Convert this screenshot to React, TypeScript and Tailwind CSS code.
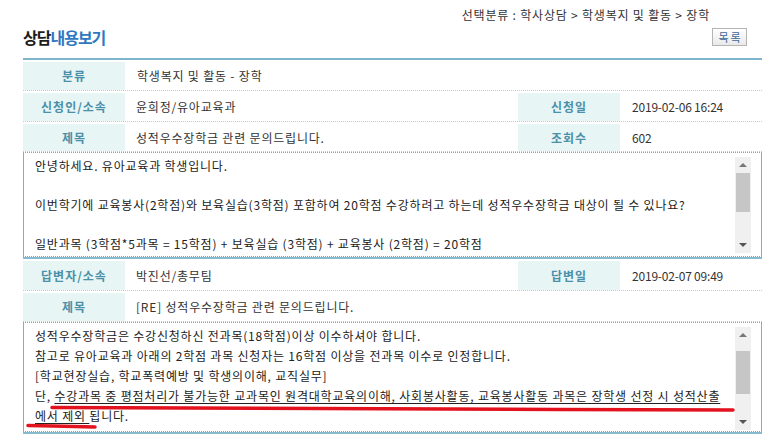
import React from 'react';

const FONT = "font-['Noto_Sans_CJK_KR','Noto_Sans',sans-serif]";

const Label = ({ children }: { children: React.ReactNode }) => (
  <div className="w-[102px] shrink-0 bg-[#e8f5f5] flex items-center justify-center text-[12px] font-bold tracking-[1px] text-[#4a90a8]">
    {children}
  </div>
);

const Value = ({
  children,
  wide,
  plain,
}: {
  children: React.ReactNode;
  wide?: boolean;
  plain?: boolean;
}) => (
  <div
    className={
      (wide ? 'w-[393px] pl-[11px]' : 'flex-1 pl-[12px]') +
      (plain ? ' tracking-[-0.2px]' : ' tracking-[0.8px]') +
      ' flex items-center text-[12px] text-[#333] whitespace-nowrap'
    }
  >
    {children}
  </div>
);

const Row = ({ children, h = 'h-[31px]' }: { children: React.ReactNode; h?: string }) => (
  <div className={h + ' flex border-b border-dotted border-[#c9c9c9] pt-[2px]'}>{children}</div>
);

type ScrollProps = { gap: string; thumb: string };

const Scrollbar = ({ gap, thumb }: ScrollProps) => (
  <div className="w-[16px] shrink-0 bg-[#f0f0f0] flex flex-col">
    <div className="h-[16px] flex items-center justify-center">
      <div className="w-0 h-0 border-x-[4px] border-x-transparent border-b-[4px] border-b-[#777]" />
    </div>
    <div className={gap} />
    <div className={thumb + ' bg-[#c6c6c6] mx-[1px]'} />
    <div className="flex-1" />
    <div className="h-[16px] flex items-center justify-center">
      <div className="w-0 h-0 border-x-[4px] border-x-transparent border-t-[4px] border-t-[#555]" />
    </div>
  </div>
);

const TextBox = ({
  height,
  lead,
  pad,
  bar,
  children,
}: {
  height: string;
  lead: string;
  pad: string;
  bar: ScrollProps;
  children: React.ReactNode;
}) => (
  <div className="border-y border-dotted border-[#7fa8bb]">
    <div className={height + ' border-x border-[#8cabbb] flex'}>
      <div
        className={
          'flex-1 pl-[11px] pt-[3px] text-[12px] tracking-[0.8px] text-[#222] whitespace-nowrap ' + lead
        }
      >
        {children}
      </div>
      <div className={'flex mr-[10px] ' + pad}>
        <Scrollbar {...bar} />
      </div>
    </div>
  </div>
);

export default function App() {
  return (
    <div className={'relative w-[769px] h-[443px] bg-white overflow-hidden ' + FONT}>
      <div className="h-[22px] pt-[8px] pr-[59px] flex justify-end text-[12px] leading-[14px] tracking-[0.8px] text-[#333]">
        선택분류 : 학사상담 &gt; 학생복지 및 활동 &gt; 장학
      </div>

      <div className="h-[30px] pl-[23px] pr-[22px] flex items-center justify-between">
        <h1 className="text-[16px] font-bold tracking-[-1px] leading-[20px] text-[#1c1c1c]">
          상담<span className="text-[#2f78c0]">내용보기</span>
        </h1>
        <button className="w-[35px] h-[18px] border border-[#b4b4b4] bg-gradient-to-b from-white to-[#e9e9e9] text-[11px] leading-[14px] text-[#3d6796] tracking-[2px] pl-[2px]">
          목록
        </button>
      </div>

      <div className="ml-[23px] w-[739px] mt-[6px]">
        <div className="h-[2px] bg-[#7db5cb]" />
        <Row>
          <Label>분류</Label>
          <Value>학생복지 및 활동 - 장학</Value>
        </Row>
        <Row>
          <Label>신청인/소속</Label>
          <Value wide>윤희정/유아교육과</Value>
          <Label>신청일</Label>
          <Value plain>2019-02-06 16:24</Value>
        </Row>
        <Row h="h-[30px]">
          <Label>제목</Label>
          <Value wide>성적우수장학금 관련 문의드립니다.</Value>
          <Label>조회수</Label>
          <Value plain>602</Value>
        </Row>

        <TextBox
          height="h-[103px]"
          lead="leading-[19.5px]"
          pad="pt-[4px] pb-[3px]"
          bar={{ gap: 'h-0', thumb: 'h-[39px]' }}
        >
          <div>안녕하세요. 유아교육과 학생입니다.</div>
          <div>&nbsp;</div>
          <div>
            이번학기에 교육봉사(2학점)와 보육실습(3학점) 포함하여 20학점 수강하려고 하는데 성적우수장학금 대상이 될 수 있나요?
          </div>
          <div>&nbsp;</div>
          <div>일반과목 (3학점*5과목 = 15학점) + 보육실습 (3학점) + 교육봉사 (2학점) = 20학점</div>
        </TextBox>

        <div className="h-[2px] bg-[#86bbcf]" />
        <Row h="h-[32px]">
          <Label>답변자/소속</Label>
          <Value wide>박진선/총무팀</Value>
          <Label>답변일</Label>
          <Value plain>2019-02-07 09:49</Value>
        </Row>
        <Row h="h-[31px]">
          <Label>제목</Label>
          <Value wide>[RE] 성적우수장학금 관련 문의드립니다.</Value>
        </Row>

        <TextBox
          height="h-[108px]"
          lead="leading-[20px]"
          pad="pt-[4px] pb-[1px]"
          bar={{ gap: 'h-[8px]', thumb: 'h-[43px]' }}
        >
          <div>성적우수장학금은 수강신청하신 전과목(18학점)이상 이수하셔야 합니다.</div>
          <div>참고로 유아교육과 아래의 2학점 과목 신청자는 16학점 이상을 전과목 이수로 인정합니다.</div>
          <div>[학교현장실습, 학교폭력예방 및 학생의이해, 교직실무]</div>
          <div>
            단,{' '}
            <span className="underline underline-offset-2">
              수강과목 중 평점처리가 불가능한 교과목인 원격대학교육의이해, 사회봉사활동, 교육봉사활동 과목은 장학생 선정 시 성적산출
            </span>
          </div>
          <div>
            <span className="underline underline-offset-2">에서 제외 </span>됩니다.
          </div>
        </TextBox>
        <div className="h-[2px] bg-[#86bbcf]" />
      </div>

      <svg className="absolute left-0 top-0 pointer-events-none" width="769" height="443">
        <path d="M52 407.5 C 250 408.5, 500 409.5, 733 410" stroke="#e2121f" strokeWidth="3.5" strokeLinecap="round" fill="none" />
        <path d="M28 425.5 C 50 426, 75 426.5, 95 427" stroke="#e2121f" strokeWidth="3.5" strokeLinecap="round" fill="none" />
      </svg>
    </div>
  );
}
